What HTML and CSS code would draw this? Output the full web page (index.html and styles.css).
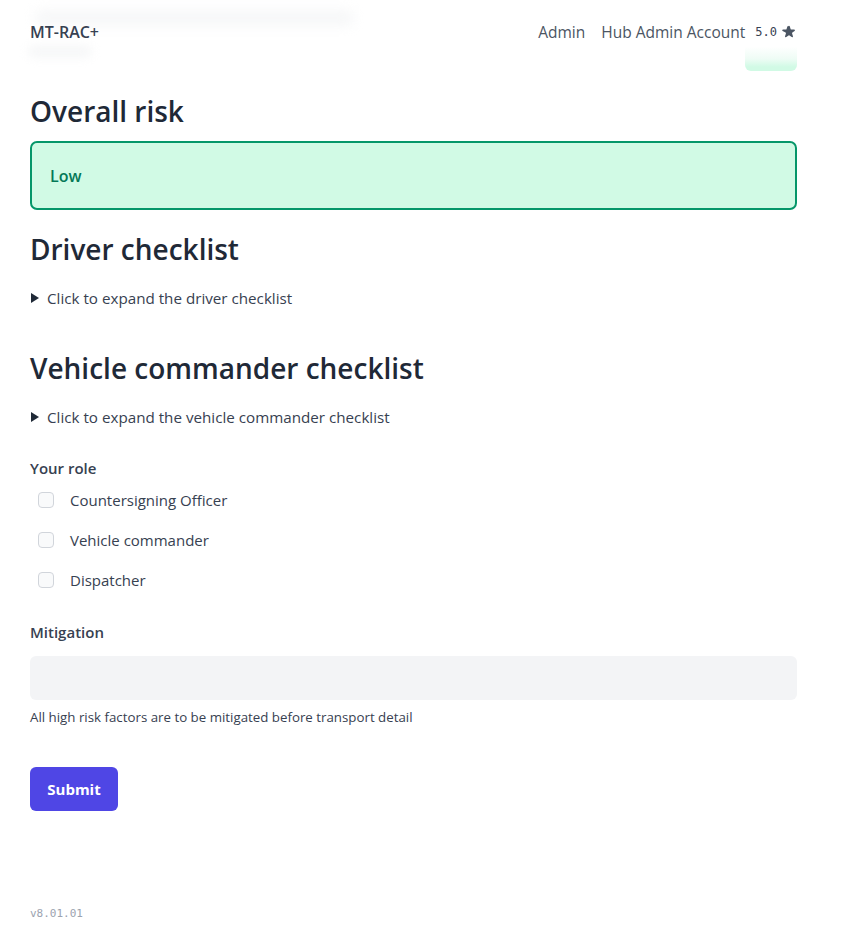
FILE: index.html
```html
<!DOCTYPE html>
<html lang="en">
<head>
<meta charset="utf-8">
<title>MT-RAC+</title>
<link rel="stylesheet" href="styles.css">
</head>
<body>
<div class="page">
  <header class="topbar">
    <div class="blur-title"></div>
    <div class="blur-sub"></div>
    <div class="blur-badge"></div>
    <div class="brand">MT-RAC+</div>
    <nav class="nav">
      <a class="nav-link" href="#">Admin</a>
      <a class="nav-link" href="#">Hub Admin Account</a>
      <span class="version-rating">5.0</span>
      <svg class="star" viewBox="0 0 20 20" width="16" height="16"><path d="M9.05 2.93c.3-.92 1.6-.92 1.9 0l1.07 3.29a1 1 0 0 0 .95.69h3.46c.97 0 1.37 1.24.59 1.81l-2.8 2.03a1 1 0 0 0-.36 1.12l1.07 3.29c.3.92-.76 1.69-1.54 1.12l-2.8-2.03a1 1 0 0 0-1.18 0l-2.8 2.03c-.78.57-1.84-.2-1.54-1.12l1.07-3.29a1 1 0 0 0-.36-1.12L1.98 8.72c-.78-.57-.38-1.81.59-1.81h3.46a1 1 0 0 0 .95-.69l1.07-3.29z" fill="#4b5563"/></svg>
    </nav>
  </header>

  <main class="content">
    <section class="section">
      <h2 class="heading">Overall risk</h2>
      <div class="risk-box">Low</div>
    </section>

    <section class="section">
      <h2 class="heading">Driver checklist</h2>
      <details class="expander"><summary>Click to expand the driver checklist</summary></details>
    </section>

    <section class="section section-gap">
      <h2 class="heading">Vehicle commander checklist</h2>
      <details class="expander"><summary>Click to expand the vehicle commander checklist</summary></details>
    </section>

    <section class="field">
      <div class="label">Your role</div>
      <div class="options">
        <label class="option"><input type="checkbox" class="check"><span>Countersigning Officer</span></label>
        <label class="option"><input type="checkbox" class="check"><span>Vehicle commander</span></label>
        <label class="option"><input type="checkbox" class="check"><span>Dispatcher</span></label>
      </div>
    </section>

    <section class="field mitigation">
      <div class="label">Mitigation</div>
      <input class="text-input" type="text">
      <p class="help">All high risk factors are to be mitigated before transport detail</p>
    </section>

    <button class="submit" type="button">Submit</button>
  </main>

  <footer class="footer">v8.01.01</footer>
</div>
</body>
</html>
```

FILE: styles.css
```css
* { box-sizing: border-box; }
html, body { margin: 0; padding: 0; background: #fff; }
body {
  font-family: "Open Sans", "Noto Sans", sans-serif;
  color: #374151;
}
.page {
  padding: 0 48px 0 30px;
  min-height: 928px;
  display: flex;
  flex-direction: column;
}
.topbar {
  position: relative;
  height: 64px;
  display: flex;
  align-items: center;
  justify-content: space-between;
}
.brand {
  position: relative;
  font-size: 16px;
  font-weight: 600;
  color: #374151;
}
.nav {
  position: relative;
  display: flex;
  align-items: center;
}
.nav-link {
  font-size: 15.5px;
  color: #4b5563;
  text-decoration: none;
  margin-left: 16px;
}
.version-rating {
  font-family: "DejaVu Sans Mono", "Liberation Mono", monospace;
  font-size: 12px;
  color: #374151;
  margin-left: 10px;
  margin-right: 4px;
}
.star { display: block; }
.blur-title {
  position: absolute;
  left: 4px;
  top: 10px;
  width: 320px;
  height: 16px;
  border-radius: 8px;
  background: #eceef0;
  filter: blur(6px);
  opacity: .45;
}
.blur-sub {
  position: absolute;
  left: -2px;
  top: 45px;
  width: 64px;
  height: 13px;
  border-radius: 6px;
  background: #eceef0;
  filter: blur(5px);
  opacity: .45;
}
.blur-badge {
  position: absolute;
  right: 0;
  top: 44px;
  width: 52px;
  height: 27px;
  border-radius: 0 0 6px 6px;
  background: linear-gradient(to bottom, #fff 10%, #eefcf5 55%, #d1fae5 85%);
}
.content {
  display: flex;
  flex-direction: column;
  align-items: flex-start;
  padding-top: 29px;
}
.section { width: 100%; }
.heading {
  margin: 0;
  font-size: 28px;
  line-height: 36px;
  font-weight: 600;
  color: #1f2937;
}
.risk-box {
  margin-top: 12px;
  margin-bottom: 21px;
  height: 69px;
  border: 2px solid #059669;
  border-radius: 7px;
  background: #d1fae5;
  color: #047857;
  font-weight: 600;
  font-size: 16px;
  display: flex;
  align-items: center;
  padding-left: 18px;
  padding-top: 1px;
}
.expander {
  margin-top: 20px;
  font-size: 15.2px;
  line-height: 22px;
  color: #374151;
}
.expander summary {
  cursor: pointer;
  list-style: none;
  display: flex;
  align-items: center;
}
.expander summary::-webkit-details-marker { display: none; }
.expander summary::before {
  content: "";
  width: 0;
  height: 0;
  border-left: 8px solid #1f2937;
  border-top: 5px solid transparent;
  border-bottom: 5px solid transparent;
  margin-left: 1px;
  margin-right: 8px;
}
.section-gap { margin-top: 41px; }
.field { width: 100%; }
.label {
  font-size: 15px;
  font-weight: 600;
  color: #374151;
  line-height: 22px;
}
.content > .field { margin-top: 29px; }
.options {
  display: flex;
  flex-direction: column;
  gap: 18px;
  margin-top: 10px;
}
.option {
  display: flex;
  align-items: center;
  height: 22px;
  font-size: 15px;
  color: #374151;
  padding-left: 8px;
}
.check {
  appearance: none;
  -webkit-appearance: none;
  width: 16px;
  height: 16px;
  margin: 0 16px 0 0;
  border: 1px solid #d1d5db;
  border-radius: 4px;
  background: #f9fafb;
}
.content > .mitigation { margin-top: 30px; }
.text-input {
  display: block;
  width: 100%;
  height: 44px;
  margin-top: 13px;
  border: 0;
  border-radius: 6px;
  background: #f3f4f6;
}
.help {
  margin: 8px 0 0;
  font-size: 13.3px;
  line-height: 18px;
  color: #374151;
}
.submit {
  margin-top: 41px;
  width: 88px;
  height: 44px;
  border: 0;
  border-radius: 6px;
  background: #4f46e5;
  color: #fff;
  font-family: inherit;
  font-size: 15px;
  font-weight: 700;
}
.footer {
  margin-top: auto;
  padding-bottom: 8px;
  font-family: "DejaVu Sans Mono", "Liberation Mono", monospace;
  font-size: 11px;
  color: #9ca3af;
}
```
